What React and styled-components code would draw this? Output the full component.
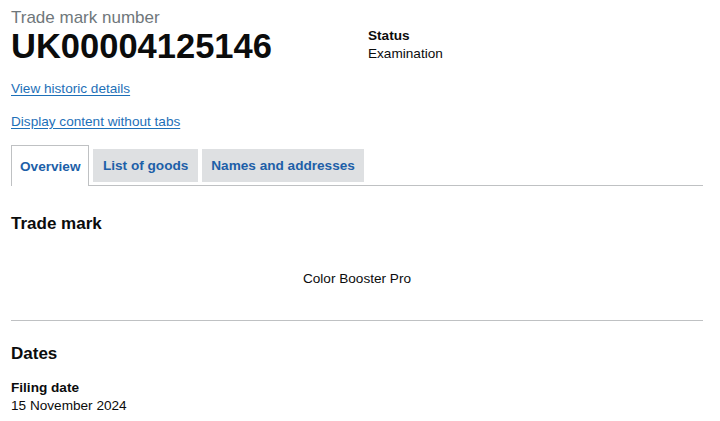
import React from "react";
import styled, { createGlobalStyle } from "styled-components";

const Global = createGlobalStyle`
  html, body { margin: 0; padding: 0; background: #fff; }
  body {
    font-family: "Liberation Sans", Arial, Helvetica, sans-serif;
    color: #0b0c0c;
    -webkit-font-smoothing: antialiased;
  }
`;

const Page = styled.main`
  width: 692px;
  padding: 8px 0 0 11px;
`;

const Header = styled.div`
  display: grid;
  grid-template-columns: 357px 1fr;
`;

const Caption = styled.span`
  display: block;
  font-size: 17px;
  line-height: 20px;
  color: #6f777b;
`;

const Title = styled.h1`
  margin: 0;
  font-size: 34.5px;
  line-height: 36px;
  font-weight: 700;
  color: #0b0c0c;
`;

const Meta = styled.dl`
  margin: 19px 0 0;
  font-size: 13.6px;
  line-height: 18px;
`;

const Term = styled.dt`
  font-weight: 700;
`;

const Value = styled.dd`
  margin: 0;
`;

const LinkRow = styled.p`
  margin: ${(p) => p.$top}px 0 0;
  font-size: 13.6px;
  line-height: 18px;
`;

const Link = styled.a`
  color: #1d70b8;
  text-decoration: underline;
  text-underline-offset: 2px;
`;

const TabList = styled.ul`
  list-style: none;
  margin: 14px 0 0;
  padding: 0;
  display: flex;
  align-items: flex-start;
  border-bottom: 1px solid #bfc1c3;
`;

const Tab = styled.li`
  margin-right: 4px;
  font-size: 13.6px;
  font-weight: 700;
  display: flex;
  align-items: center;
  box-sizing: border-box;
  color: #1d5fa8;
  ${(p) =>
    p.$active
      ? `
    height: 41px;
    margin-bottom: -1px;
    padding: 0 8px;
    background: #fff;
    border: 1px solid #bfc1c3;
    border-bottom: none;
  `
      : `
    height: 33px;
    margin-top: 4px;
    padding: 0 9.5px;
    background: #dee0e2;
  `}
`;

const Panel = styled.section`
  padding-top: 27px;
`;

const SectionTitle = styled.h2`
  margin: ${(p) => p.$top || 0}px 0 0;
  font-size: 17px;
  line-height: 22px;
  font-weight: 700;
`;

const MarkText = styled.p`
  margin: 35px 0 0;
  text-align: center;
  font-size: 13.6px;
  line-height: 18px;
`;

const Divider = styled.hr`
  margin: 32px 0 0;
  border: none;
  border-top: 1px solid #bfc1c3;
`;

const DateList = styled.dl`
  margin: 14px 0 0;
  font-size: 13.6px;
  line-height: 18px;
`;

export default function App() {
  return (
    <>
      <Global />
      <Page>
        <Header>
          <div>
            <Caption>Trade mark number</Caption>
            <Title>UK00004125146</Title>
          </div>
          <Meta>
            <Term>Status</Term>
            <Value>Examination</Value>
          </Meta>
        </Header>
        <LinkRow $top={16}>
          <Link href="#">View historic details</Link>
        </LinkRow>
        <LinkRow $top={15}>
          <Link href="#">Display content without tabs</Link>
        </LinkRow>
        <TabList>
          <Tab $active>Overview</Tab>
          <Tab>List of goods</Tab>
          <Tab>Names and addresses</Tab>
        </TabList>
        <Panel>
          <SectionTitle>Trade mark</SectionTitle>
          <MarkText>Color Booster Pro</MarkText>
          <Divider />
          <SectionTitle $top={22}>Dates</SectionTitle>
          <DateList>
            <Term>Filing date</Term>
            <Value>15 November 2024</Value>
          </DateList>
        </Panel>
      </Page>
    </>
  );
}
